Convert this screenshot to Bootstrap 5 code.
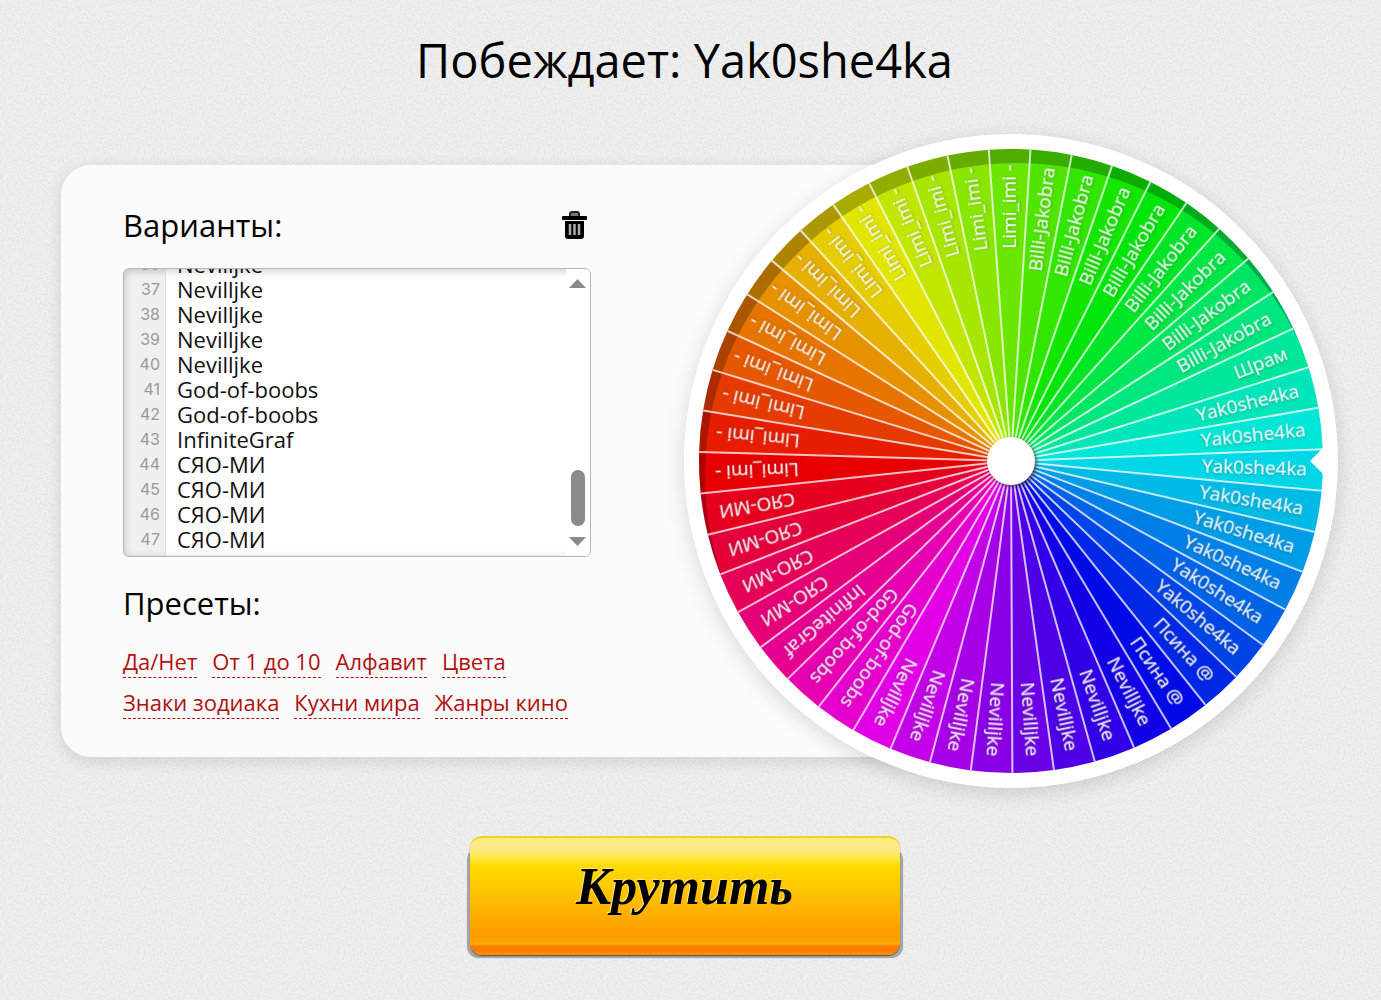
<!DOCTYPE html>
<html lang="ru">
<head>
<meta charset="utf-8">
<meta name="viewport" content="width=device-width, initial-scale=1">
<title>Колесо удачи</title>
<link href="https://cdn.jsdelivr.net/npm/bootstrap@5.3.0/dist/css/bootstrap.min.css" rel="stylesheet">
<style>
  body {
    background-color: #f0f0f0;
    background-image: url("data:image/svg+xml,%3Csvg xmlns='http://www.w3.org/2000/svg' width='200' height='200'%3E%3Cfilter id='n' x='0' y='0' width='1' height='1'%3E%3CfeTurbulence type='fractalNoise' baseFrequency='.45' numOctaves='2' stitchTiles='stitch'/%3E%3CfeColorMatrix values='0 0 0 0 0 0 0 0 0 0 0 0 0 0 0 .13 0 0 0 -.05'/%3E%3C/filter%3E%3Crect width='200' height='200' filter='url(%23n)'/%3E%3C/svg%3E");
    color: #000;
    font-family: "Open Sans", "Noto Sans", sans-serif;
  }
  .page { padding: 28px 43px 40px 61px; }
  .winner { font-size: 47px; line-height: 64px; padding-right: 30px; }
  .stage { margin-top: 42px; }
  .panel {
    background: #fbfbfb;
    border-radius: 30px;
    box-shadow: 0 4px 16px rgba(0, 0, 0, .12);
    padding: 39px 62px 38px;
    min-width: 0;
  }
  .panel-body { max-width: 468px; }
  .caption { font-size: 31px; line-height: 42px; }
  .editor {
    height: 289px;
    margin-top: 22px;
    margin-bottom: 25px;
    background: #fff;
    border: 1px solid #b5b5b5;
    border-radius: 6px;
    box-shadow: inset 0 2px 8px rgba(0, 0, 0, .2);
    overflow: hidden;
  }
  .gutter {
    width: 42px;
    background: rgba(0, 0, 0, .06);
    border-right: 1px solid #ddd;
    color: #999;
    font: 16px/25px Inter, sans-serif;
    padding: 0 5px 8px 0;
    overflow: hidden;
  }
  .names {
    border: 0;
    outline: 0;
    resize: none;
    background: transparent;
    color: #111;
    font-size: 22px;
    line-height: 25px;
    padding: 0 0 8px 11px;
    min-width: 0;
    scrollbar-width: none;
  }
  .names::-webkit-scrollbar { display: none; }
  .presets { gap: 8px 15px; margin-top: 21px; }
  .presets a {
    color: #b01010;
    font-size: 22px;
    line-height: 32px;
    border-bottom: 1px dashed #b01010;
    text-decoration: none;
  }
  .wheel-box { width: 654px; margin-left: -327px; }
  .wheel {
    border-radius: 50%;
    box-shadow: 0 5px 20px rgba(0, 0, 0, .14);
  }
  .wheel text {
    fill: #fff;
    fill-opacity: .9;
    stroke: #fff;
    stroke-opacity: .3;
    font-size: 19px;
    text-anchor: end;
    filter: drop-shadow(0 1px 1px rgba(0, 0, 0, .3));
  }
  .hub { filter: drop-shadow(2px 2px 2px rgba(0, 0, 0, .6)); }
  .spin {
    position: relative;
    width: 430px;
    height: 119px;
    margin-top: 48px;
    margin-right: 30px;
    padding: 0 0 19px;
    border: 0;
    border-top: 2px solid #f5d020;
    border-radius: 12px;
    background: linear-gradient(#ffec80 0, #fdea88 10px, #ffe640 21px, #ffdc00 27px, #ffbe00 60px, #ff9c00 96px, #ffa000 104px, #ffb010 106px, #ff7f00 108px, #ff7800 112px, #ff9000 117px);
    box-shadow: 0 1px 1px #555;
    color: #000;
    font: italic bold 52px/98px "Liberation Serif", serif;
    text-shadow: -1px -1px 1px #ffe680;
  }
  .spin::before {
    content: "";
    position: absolute;
    z-index: -1;
    inset: 10px -3px -3px;
    border-radius: 12px;
    background: #a6a6a6;
    box-shadow: 0 0 1px #a6a6a6;
  }
  @media (max-width: 1200px) {
    .wheel-box { margin: 24px auto 0; max-width: 100%; }
    .stage { flex-direction: column; }
    .page { padding-left: 16px; padding-right: 16px; }
    .spin, .winner { margin-right: 0; padding-right: 0; max-width: 100%; }
  }
</style>
</head>
<body>
<main class="page">
  <h1 class="winner fw-normal text-center mb-0">Побеждает: Yak0she4ka</h1>

  <div class="stage d-flex align-items-center">
    <section class="panel flex-grow-1">
      <div class="panel-body">
        <div class="d-flex justify-content-between align-items-center">
          <label class="caption" for="names">Варианты:</label>
          <button type="button" class="btn p-0 border-0 d-flex me-1" aria-label="Очистить">
            <svg width="25" height="29" viewBox="0 0 25 29" aria-hidden="true">
              <path d="M8 5V3q0-2 2-2h5q2 0 2 2v2" fill="#777" stroke="#222" stroke-width="2"/>
              <rect x="0" y="5" width="25" height="4" rx="1"/>
              <path d="M3 10h19v15q0 3-3 3H6q-3 0-3-3z"/>
              <path d="M8 13v11M12.500 13v11M17 13v11" stroke="#aaa" stroke-width="2.500"/>
            </svg>
          </button>
        </div>
        <div class="editor d-flex">
          <div class="gutter text-end flex-shrink-0" id="gutter"></div>
          <textarea class="names flex-grow-1" id="names" wrap="off" spellcheck="false"></textarea>
          <svg class="flex-shrink-0" width="24" height="287" viewBox="0 0 24 287" aria-hidden="true">
            <rect width="24" height="287" fill="#fff"/>
            <path d="M3 19 11.500 10 20 19zM3 268 11.500 277 20 268z" fill="#8b8b8b"/>
            <rect x="5" y="201" width="14" height="56" rx="7" fill="#8b8b8b"/>
          </svg>
        </div>
        <h2 class="caption fw-normal mb-0">Пресеты:</h2>
        <nav class="presets d-flex flex-wrap" aria-label="Пресеты">
          <a href="#">Да/Нет</a>
          <a href="#">От 1 до 10</a>
          <a href="#">Алфавит</a>
          <a href="#">Цвета</a>
          <a href="#">Знаки зодиака</a>
          <a href="#">Кухни мира</a>
          <a href="#">Жанры кино</a>
        </nav>
      </div>
    </section>
    <div class="wheel-box flex-shrink-0">
      <svg class="wheel d-block w-100" id="wheel" viewBox="-327 -327 654 654" role="img" aria-label="Колесо">
        <circle r="327" fill="#fff"/>
        <g id="slices"></g>
        <mask id="rim"><rect x="-327" y="-327" width="654" height="654" fill="#fff"/><circle cx="6" cy="14" r="312" fill="#000"/></mask>
        <circle r="312" fill="#000" fill-opacity=".25" mask="url(#rim)"/>
        <g id="rays" stroke="#fff" stroke-opacity=".75" stroke-width="2"></g>
        <g id="labels"></g>
        <circle class="hub" r="24" fill="#fff"/>
        <path d="M314-15 299 0 314 15z" fill="#fff"/>
      </svg>
    </div>
  </div>

  <div class="text-center">
    <button type="button" class="spin">Крутить</button>
  </div>
</main>
<script src="https://cdn.jsdelivr.net/npm/bootstrap@5.3.0/dist/js/bootstrap.bundle.min.js"></script>
<script>
  const groups = [["Limi_imi -", 13], ["Billi-Jakobra", 8], ["Шрам", 1], ["Yak0she4ka", 8], ["Псина @", 2],
    ["Nevilljke", 8], ["God-of-boobs", 2], ["InfiniteGraf", 1], ["СЯО-МИ", 4]];
  const items = groups.flatMap(([name, n]) => Array(n).fill(name));
  const names = document.getElementById("names");
  const gutter = document.getElementById("gutter");
  names.value = items.join("\n");
  gutter.innerHTML = items.map((_, i) => `<div>${i + 1}</div>`).join("");
  names.scrollTop = gutter.scrollTop = 892;
  names.addEventListener("scroll", () => { gutter.scrollTop = names.scrollTop; });

  const R = 312, step = 360 / items.length, start = 174;
  const at = (deg, r) => {
    const a = deg * Math.PI / 180;
    return (r * Math.cos(a)).toFixed(2) + " " + (r * Math.sin(a)).toFixed(2);
  };
  let slices = "", rays = "", labels = "";
  items.forEach((name, i) => {
    const a = start + i * step;
    slices += `<path d="M0 0L${at(a, R)}A${R} ${R} 0 0 1 ${at(a + step + 0.2, R)}Z" fill="hsl(${i * step} 100% 45%)"/>`;
    rays += `<path d="M${at(a, 20)}L${at(a, R)}"/>`;
    labels += `<text x="296" y="6" transform="rotate(${a + step / 2})">${name}</text>`;
  });
  document.getElementById("slices").innerHTML = slices;
  document.getElementById("rays").innerHTML = rays;
  document.getElementById("labels").innerHTML = labels;
</script>
</body>
</html>
